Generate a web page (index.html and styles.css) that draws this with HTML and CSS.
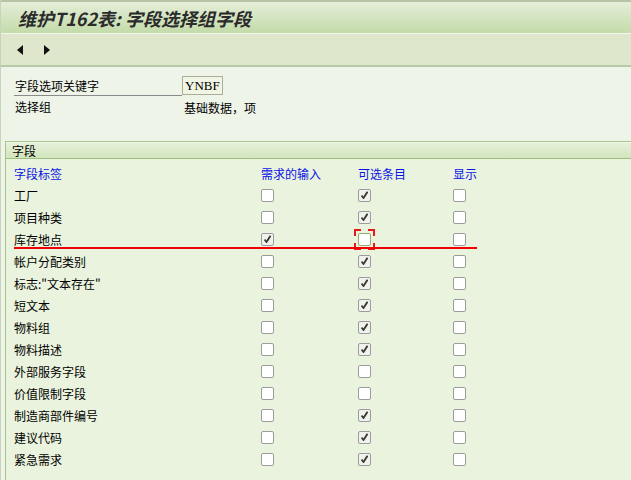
FILE: index.html
```html
<!DOCTYPE html>
<html lang="zh">
<head>
<meta charset="utf-8">
<link rel="stylesheet" href="styles.css">
</head>
<body>
<div class="page">
  <div class="titlebar"><h1 class="title">维护T162表: 字段选择组字段</h1></div>
  <div class="toolbar">
    <span class="arrow arrow-left"></span>
    <span class="arrow arrow-right"></span>
  </div>
  <div class="keys">
    <div class="keyrow">
      <span class="keylabel underlined">字段选项关键字</span>
      <span class="keyinput">YNBF</span>
    </div>
    <div class="keyrow">
      <span class="keylabel">选择组</span>
      <span class="keyvalue">基础数据，项</span>
    </div>
  </div>
  <div class="group">
    <div class="group-head">字段</div>
    <div class="group-body">
      <div class="grid">
        <div class="hdr">字段标签</div><div class="hdr">需求的输入</div><div class="hdr">可选条目</div><div class="hdr">显示</div>

        <div class="lbl">工厂</div><div class="cell"><span class="cb"></span></div><div class="cell"><span class="cb on"></span></div><div class="cell"><span class="cb"></span></div>
        <div class="lbl">项目种类</div><div class="cell"><span class="cb"></span></div><div class="cell"><span class="cb on"></span></div><div class="cell"><span class="cb"></span></div>
        <div class="lbl">库存地点</div><div class="cell"><span class="cb on"></span></div><div class="cell"><span class="cb focus"><span class="corner tl"></span><span class="corner tr"></span><span class="corner bl"></span><span class="corner br"></span></span></div><div class="cell"><span class="cb"></span></div>
        <div class="lbl">帐户分配类别</div><div class="cell"><span class="cb"></span></div><div class="cell"><span class="cb on"></span></div><div class="cell"><span class="cb"></span></div>
        <div class="lbl">标志:"文本存在"</div><div class="cell"><span class="cb"></span></div><div class="cell"><span class="cb on"></span></div><div class="cell"><span class="cb"></span></div>
        <div class="lbl">短文本</div><div class="cell"><span class="cb"></span></div><div class="cell"><span class="cb on"></span></div><div class="cell"><span class="cb"></span></div>
        <div class="lbl">物料组</div><div class="cell"><span class="cb"></span></div><div class="cell"><span class="cb on"></span></div><div class="cell"><span class="cb"></span></div>
        <div class="lbl">物料描述</div><div class="cell"><span class="cb"></span></div><div class="cell"><span class="cb on"></span></div><div class="cell"><span class="cb"></span></div>
        <div class="lbl">外部服务字段</div><div class="cell"><span class="cb"></span></div><div class="cell"><span class="cb"></span></div><div class="cell"><span class="cb"></span></div>
        <div class="lbl">价值限制字段</div><div class="cell"><span class="cb"></span></div><div class="cell"><span class="cb"></span></div><div class="cell"><span class="cb"></span></div>
        <div class="lbl">制造商部件编号</div><div class="cell"><span class="cb"></span></div><div class="cell"><span class="cb on"></span></div><div class="cell"><span class="cb"></span></div>
        <div class="lbl">建议代码</div><div class="cell"><span class="cb"></span></div><div class="cell"><span class="cb on"></span></div><div class="cell"><span class="cb"></span></div>
        <div class="lbl">紧急需求</div><div class="cell"><span class="cb"></span></div><div class="cell"><span class="cb on"></span></div><div class="cell"><span class="cb"></span></div>
      </div>
      <div class="redline"></div>
    </div>
  </div>
</div>
</body>
</html>
```

FILE: styles.css
```css
* { box-sizing: border-box; }
html, body { margin: 0; padding: 0; }
body {
  width: 631px;
  height: 480px;
  overflow: hidden;
  background: #eff4e9;
  font-family: "Noto Sans CJK SC", "Noto Sans", sans-serif;
  font-size: 12px;
  color: #000;
}
.page {
  height: 480px;
  border-left: 1px solid #c8d2bd;
}
.titlebar {
  height: 34px;
  border-top: 2px solid #b4c4a4;
  border-bottom: 1px solid #f4f8ee;
  background: linear-gradient(#e5eed9, #c3dba9);
  display: flex;
  align-items: center;
  padding-left: 17px;
}
.title {
  margin: 0;
  font-size: 18px;
  font-style: italic;
  font-weight: bold;
  color: #2b2b2b;
  letter-spacing: 0;
  line-height: 1;
}
.toolbar {
  height: 33px;
  background: #dee6cc;
  border-bottom: 2px solid #b7c9a6;
  display: flex;
  align-items: center;
  gap: 21px;
  padding-left: 16px;
}
.arrow {
  width: 0;
  height: 0;
  border-top: 5px solid transparent;
  border-bottom: 5px solid transparent;
}
.arrow-left { border-right: 6px solid #111; }
.arrow-right { border-left: 6px solid #111; }
.keys {
  padding: 8px 0 0 13px;
  height: 74px;
}
.keyrow {
  display: flex;
  align-items: center;
  height: 20px;
  margin-bottom: 2px;
}
.keylabel {
  width: 168px;
  padding-left: 1px;
  line-height: 18px;
}
.underlined {
  border-bottom: 1px solid #8a8a8a;
  margin-top: 3px;
}
.keyinput {
  font-family: "Liberation Serif", serif;
  font-size: 13px;
  background: #f1f5e3;
  border: 1px solid #a8ae9c;
  height: 19px;
  line-height: 17px;
  padding: 0 2px;
}
.keyvalue {
  padding-left: 2px;
}
.group {
  margin-left: 4px;
  border: 1px solid #a8c48c;
  border-right: none;
  border-bottom: none;
  height: 340px;
  background: #eaf3dd;
}
.group-head {
  height: 17px;
  line-height: 15px;
  padding-left: 6px;
  background: linear-gradient(#e6f0d9, #d2e5bd);
  border-bottom: 1px solid #9ebf80;
  border-top: 1px solid #f2f7ea;
}
.group-body {
  position: relative;
  padding: 4px 0 0 8px;
}
.grid {
  display: grid;
  grid-template-columns: 247px 97px 95px 60px;
  grid-auto-rows: 22px;
  grid-template-rows: 21px;
  align-items: center;
}
.hdr {
  color: #0a14e6;
}
.lbl {
  white-space: nowrap;
}
.cell { display: flex; align-items: center; }
.cb {
  position: relative;
  display: inline-block;
  width: 13px;
  height: 13px;
  border: 1px solid #9c9c9c;
  border-radius: 2px;
  background: #fff;
  margin-top: 1px;
}
.cb.on {
  background: #f1f1ed;
}
.cb.on::after {
  content: "";
  position: absolute;
  left: 2px;
  top: 1px;
  width: 7px;
  height: 8px;
  background: no-repeat center/contain url("data:image/svg+xml,%3Csvg xmlns='http://www.w3.org/2000/svg' viewBox='0 0 7 8'%3E%3Cpath d='M0.5 4.5 L2.5 7 L6.5 0.8' fill='none' stroke='%23333d2e' stroke-width='1.8'/%3E%3C/svg%3E");
}
.cb.focus {
  border-color: #8fb06c;
}
.corner {
  position: absolute;
  width: 7px;
  height: 7px;
  border: 0 solid #e31b1b;
}
.corner.tl { left: -5px; top: -5px; border-left-width: 2px; border-top-width: 2px; }
.corner.tr { right: -5px; top: -5px; border-right-width: 2px; border-top-width: 2px; }
.corner.bl { left: -5px; bottom: -5px; border-left-width: 2px; border-bottom-width: 2px; }
.corner.br { right: -5px; bottom: -5px; border-right-width: 2px; border-bottom-width: 2px; }
.redline {
  position: absolute;
  left: 8px;
  top: 88px;
  width: 463px;
  height: 2px;
  background: #f00000;
}
```
